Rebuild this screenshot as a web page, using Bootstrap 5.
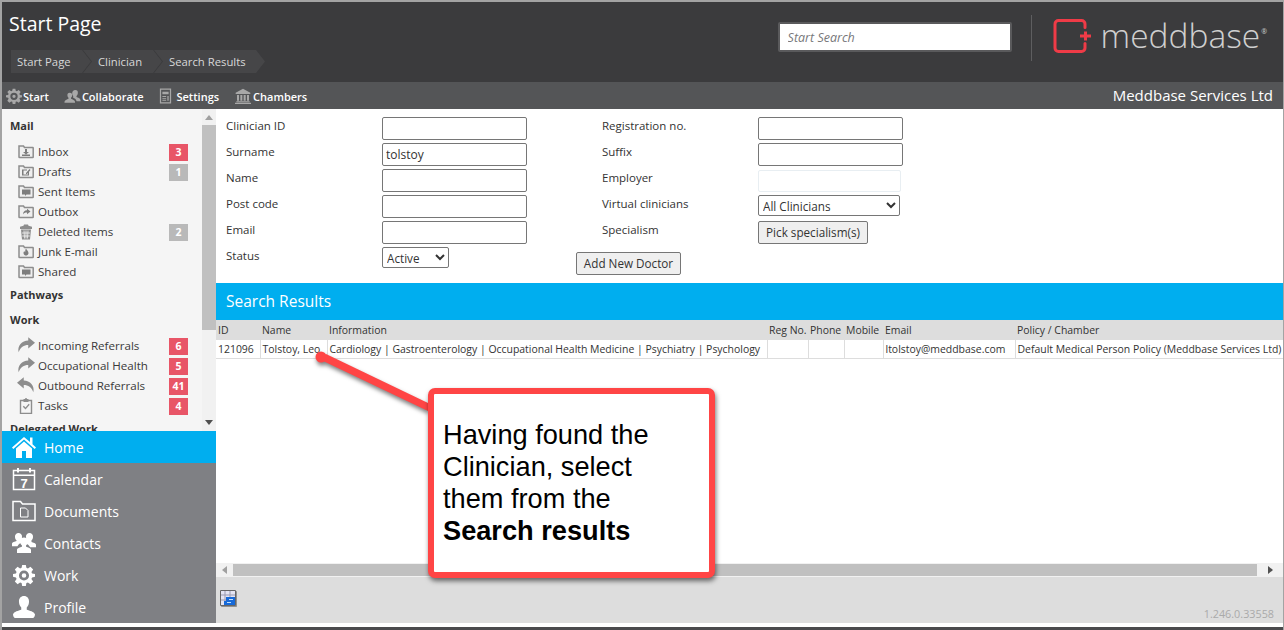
<!DOCTYPE html>
<html lang="en">
<head>
<meta charset="utf-8">
<title>Start Page</title>
<link rel="stylesheet" href="https://cdn.jsdelivr.net/npm/bootstrap@5.3.0/dist/css/bootstrap.min.css">
<style>
html,body{height:630px;overflow:hidden}
body{font-family:"Open Sans","Noto Sans",sans-serif;font-size:11.5px;color:#333;background:#fff}
.shell{position:relative;width:1284px;height:630px;background:#fff;border-top:2px solid #a3a3a3;border-left:2px solid #a3a3a3;border-right:1px solid #a3a3a3;overflow:hidden}
.head-top{height:80px;background:#3b3b3d;color:#fff}
.page-title{font-size:19.5px;line-height:26px;padding:9px 0 0 7px;margin:0;font-weight:400}
.crumbs{margin:13px 0 0 9px;height:23px}
.crumb{height:23px;line-height:23px;background:#464648;color:#d8d8d8;font-size:11.3px;clip-path:polygon(0 0,calc(100% - 9px) 0,100% 50%,calc(100% - 9px) 100%,0 100%,9px 50%);margin-right:-8px}
.crumb1{width:80px;padding-left:6px;clip-path:polygon(0 0,calc(100% - 9px) 0,100% 50%,calc(100% - 9px) 100%,0 100%)}
.crumb2{width:79px;padding-left:15px}
.crumb3{width:111px;padding-left:15px}
.search-box{width:234px;height:30px;margin:20px 19px 0 0;border:2px solid #5a5a5c;background:#fff;color:#77777a;font-style:italic;font-size:12.5px;padding:0 8px;border-radius:2px}
.search-box::placeholder{color:#77777a;opacity:1}
.logo-rule{width:1px;height:46px;background:#5e5e60;margin:13px 21px 0 0}
.logo-wrap{margin:9px 16px 0 0}
.logo-text{font-size:33.5px;font-weight:300;color:#cfcfcf;line-height:48px;margin-left:10px}
.logo-reg{font-size:7px;color:#cfcfcf;margin:16px 0 0 1px;line-height:10px}
.tool-bar{height:27px;background:#545557;color:#fff;padding:3px 0 0 4px}
.tool-item{font-weight:600;font-size:11px;margin-right:15px;color:#fff}
.tool-item svg{margin-right:1px;margin-top:-3px;color:#a8a8a8}
.tool-item:nth-child(3){margin-right:16px}
.tool-item:nth-child(3) svg{margin-right:3px}
.tool-item:nth-child(4) svg{margin-right:2px}
.org-name{font-size:15px;font-weight:500;margin:-3px 10px 0 auto}
.body-row{height:514px}
.side-col{width:214px;flex:none}
.side-top{height:322px;background:#f5f5f5}
.side-list{width:200px;height:322px;overflow:hidden;padding-top:7px}
.side-head{font-weight:700;font-size:11px;color:#333;padding-left:8px;line-height:20px}
.side-gap1{margin-top:3px}
.side-gap2{margin-top:5px}
.side-gap3{margin-top:3px}
.side-item{height:20px;padding-left:16px;font-size:11.6px;color:#3a3a3a}
.side-item svg{width:16px;height:16px;margin-right:4px;flex:none}
.side-item svg.wide-icon{width:18px;height:18px;margin:-3px 3px 0 -1px}
.side-mt{height:6px}
.count{width:19px;height:17px;line-height:17px;text-align:center;font-size:10.5px;font-weight:700;color:#fff;margin-left:auto;margin-right:14px}
.count-red{background:#e85567}
.count-grey{background:#b9b9b9}
.v-track{width:14px;background:#f1f1f1}
.v-thumb{height:205px;background:#c0c0c0}
.arrow-box{height:16px;color:#888}
.arrow-tall{height:100px;align-items:flex-end;padding-bottom:5px}
.main-nav{height:192px;background:#7f8084}
.main-link{height:32px;color:#fff;font-size:14px;padding-left:10px;text-decoration:none}
.main-link svg{width:24px;height:24px;margin-right:8px;flex:none}
.main-link svg.small-icon{width:22px;height:22px;margin:0 9px 0 1px}
.main-active{background:#00aeef}
.side-white{height:4px;background:#fff}
.content{width:1067px;flex:none;background:#fff}
.form-zone{height:174px;padding-top:8px}
.form-left{width:360px;padding-left:10px}
.form-line{height:26px}
.form-line label{width:156px;flex:none;font-size:11.5px;color:#333;padding-bottom:9px}
.form-right label{margin-left:26px}
.fld{width:145px;height:23px;border:1px solid #767676;border-radius:2px;padding:0 3px;font-size:12px;color:#333;background:#fff;font-family:inherit;margin-bottom:3px}
.fld-off{border-color:#e8eef2;width:143px;height:22px}
.pick{height:23px;border:1px solid #767676;border-radius:2px;background:#efefef;font-size:11.7px;color:#333;font-family:inherit;margin-bottom:3px;padding:0}
.pick-add{width:105px;margin-top:5px}
.pick-spec{width:110px}
.sel{height:21px;border:1px solid #767676;border-radius:2px;background:#fff;font-size:11.7px;color:#333;font-family:inherit;margin-bottom:5px}
.sel-status{width:67px}
.sel-virtual{width:142px}
.band{height:37px;line-height:37px;background:#00aeef;color:#fff;font-size:15.5px;padding-left:10px}
.res-table{table-layout:fixed;width:1067px;margin:0;border-collapse:collapse;font-size:10.45px;color:#333}
.res-table th{background:#ddd;font-weight:400;height:20px;padding:1px 2px 0;border:0;white-space:nowrap;overflow:hidden}
.res-table td{height:18px;padding:2px 2px 0;border-bottom:1px solid #ddd;border-right:1px solid #ddd;white-space:nowrap;overflow:hidden}
.res-table td:last-child{border-right:0}
.c-id{width:44px}.c-name{width:67px}.c-info{width:440px}.c-reg{width:41px}.c-ph{width:36px}.c-mob{width:39px}.c-mail{width:132px}.c-pol{width:268px}
.blank{height:204px}
.h-track{height:14px;background:#f1f1f1;padding:1px 0}
.h-btn{width:17px;color:#666;font-size:8px;text-align:center}
.h-btn-end{width:26px}
.h-thumb{background:#c0c0c0}
.foot-bar{height:46px;background:#ddd;padding:13px 0 0 4px}
.grid-icon{filter:drop-shadow(1px 1px 0 rgba(0,0,0,.35))}
.ver{font-size:10.8px;color:#aaa;margin:16px 9px 0 auto}
.bottom-strip{height:3px;background:#4a4a4c;position:absolute;left:0;right:0;bottom:0}
.pointer{position:absolute;left:300px;top:335px;filter:drop-shadow(1px 3px 2px rgba(0,0,0,.5))}
.callout{position:absolute;left:426px;top:386px;width:287px;height:190px;border:6px solid #ff4545;border-radius:7px;background:#fff;box-shadow:1px 3px 5px rgba(0,0,0,.55);font-family:"Liberation Sans",Arial,sans-serif;font-size:27.2px;line-height:32px;color:#000;padding:25px 9px 0 9px}
.callout b{font-weight:700}
</style>
</head>
<body>
<svg width="0" height="0" class="position-absolute">
<defs>
<symbol id="i-gear" viewBox="0 0 24 24"><path fill="currentColor" fill-rule="evenodd" d="M10 1h4l.6 3.200 1.700.7L19 3l3 3-1.900 2.700.7 1.700L24 11v3l-3.200.6-.7 1.700L22 19l-3 3-2.700-1.900-1.700.7L14 24h-4l-.6-3.200-1.700-.7L5 22l-3-3 1.900-2.700-.7-1.700L0 14v-3l3.200-.6.7-1.700L2 6l3-3 2.700 1.900 1.700-.7zM12 7a5.500 5.500 0 1 0 0 11 5.500 5.500 0 0 0 0-11zm0 3a2.500 2.500 0 1 1 0 5 2.500 2.500 0 0 1 0-5z"/></symbol>
<symbol id="i-people" viewBox="0 0 24 24"><path fill="currentColor" d="M16 3a4 4 0 0 1 4 4.500c0 2-1 3.500-2 4.500v1.500c2 .8 6 2 6 4.500v2h-6c0-3-3-4.500-5-5.500v-2.500c-1-1-1.500-2.500-1.500-4C11.500 5 13.500 3 16 3zM8 7a3.500 3.500 0 0 1 3.500 3.800c0 1.700-.8 3-1.700 3.900v1.300c2 .9 6 2.300 6 4.500V22H0v-1.500c0-2.200 4-3.600 6-4.500v-1.300c-.9-.9-1.600-2.200-1.600-3.900A3.500 3.500 0 0 1 8 7z"/></symbol>
<symbol id="i-doc" viewBox="0 0 24 24"><path fill="none" stroke="currentColor" stroke-width="2" d="M4 1h16v22H4z"/><path fill="currentColor" d="M7 5h10v4H7zM7 12h6v1.500H7zM7 15h6v1.500H7zM7 18h6v1.500H7zM15 12h2v7.500h-2z"/></symbol>
<symbol id="i-bank" viewBox="0 0 24 24"><path fill="currentColor" d="M12 1l11 6v2H1V7zM3 10.500h3V19H3zM8 10.500h3V19H8zM13 10.500h3V19h-3zM18 10.500h3V19h-3zM2 20h20v1.500H2zM0 22h24v2H0z"/></symbol>
<symbol id="f-base" viewBox="0 0 16 16"><path fill="#efefef" stroke="#8d8d8d" stroke-width="1.500" d="M1 13V2h4.500l1 1.500h8.300c.2 0 .4.200.4.400V13c0 .3-.2.500-.5.500H1.500c-.3 0-.5-.2-.5-.5z"/></symbol>
<symbol id="i-inbox" viewBox="0 0 16 16"><use href="#f-base"/><path fill="#7d7d7d" d="M7 5h2v3h2l-3 2.500L5 8h2zM4 10.500h8V12H4z"/></symbol>
<symbol id="i-drafts" viewBox="0 0 16 16"><use href="#f-base"/><path fill="#7d7d7d" d="M4 5.500h5v1H5.500v4h4.500v-2l1-1v4H4zM8 9l3.500-4 1 1L9 10H8z"/></symbol>
<symbol id="i-sent" viewBox="0 0 16 16"><use href="#f-base"/><path fill="#7d7d7d" d="M4 5.500h8.500v5H8.500L7 12v-1.500H4z"/></symbol>
<symbol id="i-out" viewBox="0 0 16 16"><use href="#f-base"/><path fill="#7d7d7d" d="M9 4.800l3.500 2.700L9 10.200V8.500c-2 0-3.200.6-4 2 0-2.700 1.500-4 4-4.200z"/></symbol>
<symbol id="i-trash" viewBox="0 0 16 16"><path fill="#8d8d8d" d="M6 .5h4l.5 1.200 3.500 1V5H2V2.700l3.500-1zM3 5.500h10l-1 10H4z"/><path stroke="#f5f5f5" stroke-width=".8" d="M6 6.500l.5 8M8 6.500v8M10 6.500l-.5 8M4 9h8M4.200 12h7.600"/></symbol>
<symbol id="i-junk" viewBox="0 0 16 16"><use href="#f-base"/><path fill="#7d7d7d" d="M8 4.500c.5 1.500 2.500 2.500 2.500 4.500 0 1.500-1 2.500-2.500 2.500S5.500 10.500 5.500 9c0-1 .5-1.500 1-2 0 .7.300 1 .7 1.200C7.200 7 7.300 5.500 8 4.500z"/></symbol>
<symbol id="i-fwd" viewBox="0 0 16 16"><path fill="#8d8d8d" d="M10 1l6 5-6 5V8C6 8 3 10 1.500 14.500c-1.500-6 3-10.300 8.500-10.500z"/></symbol>
<symbol id="i-back" viewBox="0 0 16 16"><path fill="#8d8d8d" d="M6 1L0 6l6 5V8c4 0 7 2 8.500 6.500 1.500-6-3-10.300-8.500-10.500z"/></symbol>
<symbol id="i-task" viewBox="0 0 16 16"><path fill="none" stroke="#8d8d8d" stroke-width="1.400" d="M2.500 2.500h11v13h-11z"/><path fill="#8d8d8d" d="M5.500 1h1.500l.5-1h1l.5 1h1.500v3h-5zM4.800 8.800l1-1 1.700 1.700 3.200-3.700 1 .9-4.200 4.800z"/></symbol>
<symbol id="n-home" viewBox="0 0 24 24"><path fill="#fff" fill-rule="evenodd" d="M12 2l6 5V2.500h2.500v6.700L24 12.500 22.700 14 12 4.500 1.300 14 0 12.500zM4 13.500L12 6.500l8 7V23H4zM10 16v7h4v-7z"/></symbol>
<symbol id="n-cal" viewBox="0 0 24 24"><path fill="none" stroke="#fff" stroke-width="1.500" d="M1.500 3.500h21v19h-21z"/><path fill="#fff" d="M2 7.500h20V9H2zM5 1h2v4.500H5zM17 1h2v4.500h-2z"/><text x="12" y="20.500" text-anchor="middle" font-size="13" font-weight="700" fill="#fff" font-family="Liberation Sans,sans-serif">7</text></symbol>
<symbol id="n-docs" viewBox="0 0 24 24"><path fill="none" stroke="#fff" stroke-width="1.500" d="M1 21.500V2.500h7.500l2 2.500h12.500v16.500z"/><path fill="none" stroke="#fff" stroke-width="1" d="M8.500 9h5l2.500 2.500V18H8.500z"/></symbol>
<symbol id="n-con" viewBox="0 0 24 24"><path fill="#fff" d="M6.500 2a3.500 3.500 0 0 1 3.500 4c0 1.500-.7 2.500-1.500 3.300v1.200c.5.200 1 .5 1.500.7-1.500.8-4 2-4.500 4H0v-2.500c0-1.500 3-2.200 4.500-2.700V9.300C3.700 8.500 3 7.500 3 6a3.500 3.500 0 0 1 3.500-4zM17.500 2A3.500 3.500 0 0 1 21 6c0 1.500-.7 2.500-1.500 3.300V11c1.500.5 4.500 1.200 4.500 2.700v2.500h-6c-.5-2-3-3.200-4.500-4 .5-.2 1-.5 1.500-.7V9.300C14.700 8.500 14 7.500 14 6a3.500 3.500 0 0 1 3.500-4zM12 6.500a3.800 3.800 0 0 1 3.800 4.200c0 1.700-.8 2.800-1.700 3.600v1.500c1.700.6 4.900 1.500 4.900 3.200V22H5v-3c0-1.700 3.200-2.600 4.900-3.200v-1.500c-.9-.8-1.700-1.900-1.700-3.600A3.800 3.800 0 0 1 12 6.500z"/></symbol>
<symbol id="n-gear" viewBox="0 0 24 24"><use href="#i-gear" color="#fff"/></symbol>
<symbol id="n-user" viewBox="0 0 24 24"><path fill="#fff" d="M12 0c3.500 0 5.500 2.700 5.500 6 0 2.800-1 5-2.500 6.500V15c3 1 8 2 9 5 0 2-1 4-2 4H2c-1 0-2-2-2-4 1-3 6-4 9-5v-2.500C7.500 11 6.500 8.800 6.500 6 6.500 2.700 8.500 0 12 0z"/></symbol>
</defs>
</svg>
<div class="shell">
  <header class="head-top d-flex justify-content-between">
    <div>
      <h1 class="page-title">Start Page</h1>
      <nav class="crumbs d-flex">
        <div class="crumb crumb1">Start Page</div>
        <div class="crumb crumb2">Clinician</div>
        <div class="crumb crumb3">Search Results</div>
      </nav>
    </div>
    <div class="d-flex align-items-start">
      <input class="search-box" type="text" placeholder="Start Search">
      <div class="logo-rule"></div>
      <div class="logo-wrap d-flex">
        <svg width="38" height="52" viewBox="0 0 38 52"><path fill="none" stroke="#ef3b47" stroke-width="3" stroke-linecap="round" d="M32 16.500V13c0-2-1.500-3.500-3.500-3.500H5.500C3.500 9.500 2 11 2 13v24c0 2 1.500 3.500 3.500 3.500h23c2 0 3.500-1.500 3.500-3.500v-4.500"/><path fill="#ef3b47" d="M31 20.500h3v3H38v3h-4v3h-3v-3h-4v-3h4z"/></svg>
        <div class="logo-text">meddbase</div>
        <div class="logo-reg">®</div>
      </div>
    </div>
  </header>
  <div class="tool-bar d-flex align-items-center">
    <div class="tool-item d-flex align-items-center"><svg width="16" height="16"><use href="#i-gear"/></svg>Start</div>
    <div class="tool-item d-flex align-items-center"><svg width="17" height="16"><use href="#i-people"/></svg>Collaborate</div>
    <div class="tool-item d-flex align-items-center"><svg width="15" height="16"><use href="#i-doc"/></svg>Settings</div>
    <div class="tool-item d-flex align-items-center"><svg width="16" height="16"><use href="#i-bank"/></svg>Chambers</div>
    <div class="org-name">Meddbase Services Ltd</div>
  </div>
  <div class="body-row d-flex">
    <aside class="side-col">
      <div class="side-top d-flex">
        <div class="side-list flex-grow-1">
          <div class="side-head">Mail</div>
          <div class="side-mt"></div>
          <div class="side-item d-flex align-items-center"><svg><use href="#i-inbox"/></svg>Inbox<span class="count count-red">3</span></div>
          <div class="side-item d-flex align-items-center"><svg><use href="#i-drafts"/></svg>Drafts<span class="count count-grey">1</span></div>
          <div class="side-item d-flex align-items-center"><svg><use href="#i-sent"/></svg>Sent Items</div>
          <div class="side-item d-flex align-items-center"><svg><use href="#i-out"/></svg>Outbox</div>
          <div class="side-item d-flex align-items-center"><svg><use href="#i-trash"/></svg>Deleted Items<span class="count count-grey">2</span></div>
          <div class="side-item d-flex align-items-center"><svg><use href="#i-junk"/></svg>Junk E-mail</div>
          <div class="side-item d-flex align-items-center"><svg><use href="#i-sent"/></svg>Shared</div>
          <div class="side-head side-gap1">Pathways</div>
          <div class="side-head side-gap2">Work</div>
          <div class="side-mt"></div>
          <div class="side-item d-flex align-items-center"><svg class="wide-icon"><use href="#i-fwd"/></svg>Incoming Referrals<span class="count count-red">6</span></div>
          <div class="side-item d-flex align-items-center"><svg class="wide-icon"><use href="#i-fwd"/></svg>Occupational Health<span class="count count-red">5</span></div>
          <div class="side-item d-flex align-items-center"><svg class="wide-icon"><use href="#i-back"/></svg>Outbound Referrals<span class="count count-red">41</span></div>
          <div class="side-item d-flex align-items-center"><svg><use href="#i-task"/></svg>Tasks<span class="count count-red">4</span></div>
          <div class="side-head side-gap3">Delegated Work</div>
        </div>
        <div class="v-track">
          <div class="arrow-box d-flex justify-content-center align-items-center"><svg width="8" height="5"><path fill="#a0a0a0" d="M4 0l4 5H0z"/></svg></div>
          <div class="v-thumb"></div>
          <div class="arrow-box arrow-tall d-flex justify-content-center"><svg width="8" height="5"><path fill="#505050" d="M0 0h8L4 5z"/></svg></div>
        </div>
      </div>
      <nav class="main-nav">
        <a class="main-link main-active d-flex align-items-center" href="#"><svg><use href="#n-home"/></svg>Home</a>
        <a class="main-link d-flex align-items-center" href="#"><svg><use href="#n-cal"/></svg>Calendar</a>
        <a class="main-link d-flex align-items-center" href="#"><svg><use href="#n-docs"/></svg>Documents</a>
        <a class="main-link d-flex align-items-center" href="#"><svg><use href="#n-con"/></svg>Contacts</a>
        <a class="main-link d-flex align-items-center" href="#"><svg class="small-icon"><use href="#n-gear"/></svg>Work</a>
        <a class="main-link d-flex align-items-center" href="#"><svg class="small-icon"><use href="#n-user"/></svg>Profile</a>
      </nav>
    </aside>
    <main class="content">
      <form class="form-zone d-flex">
        <div class="form-left">
          <div class="form-line d-flex align-items-center"><label>Clinician ID</label><input class="fld" type="text"></div>
          <div class="form-line d-flex align-items-center"><label>Surname</label><input class="fld" type="text" value="tolstoy"></div>
          <div class="form-line d-flex align-items-center"><label>Name</label><input class="fld" type="text"></div>
          <div class="form-line d-flex align-items-center"><label>Post code</label><input class="fld" type="text"></div>
          <div class="form-line d-flex align-items-center"><label>Email</label><input class="fld" type="text"></div>
          <div class="form-line d-flex align-items-center"><label>Status</label><select class="sel sel-status"><option>Active</option></select></div>
        </div>
        <div class="form-right">
          <div class="form-line d-flex align-items-center"><label>Registration no.</label><input class="fld" type="text"></div>
          <div class="form-line d-flex align-items-center"><label>Suffix</label><input class="fld" type="text"></div>
          <div class="form-line d-flex align-items-center"><label>Employer</label><input class="fld fld-off" type="text"></div>
          <div class="form-line d-flex align-items-center"><label>Virtual clinicians</label><select class="sel sel-virtual"><option>All Clinicians</option></select></div>
          <div class="form-line d-flex align-items-center"><label>Specialism</label><button type="button" class="pick pick-spec">Pick specialism(s)</button></div>
          <button type="button" class="pick pick-add">Add New Doctor</button>
        </div>
      </form>
      <div class="band">Search Results</div>
      <table class="res-table">
        <thead><tr><th class="c-id">ID</th><th class="c-name">Name</th><th class="c-info">Information</th><th class="c-reg">Reg No.</th><th class="c-ph">Phone</th><th class="c-mob">Mobile</th><th class="c-mail">Email</th><th class="c-pol">Policy / Chamber</th></tr></thead>
        <tbody><tr><td>121096</td><td>Tolstoy, Leo</td><td>Cardiology | Gastroenterology | Occupational Health Medicine | Psychiatry | Psychology</td><td></td><td></td><td></td><td>ltolstoy@meddbase.com</td><td>Default Medical Person Policy (Meddbase Services Ltd)</td></tr></tbody>
      </table>
      <div class="blank"></div>
      <div class="h-track d-flex">
        <div class="h-btn d-flex align-items-center justify-content-center"><svg width="5" height="8"><path fill="#a0a0a0" d="M5 0v8L0 4z"/></svg></div>
        <div class="h-thumb flex-grow-1"></div>
        <div class="h-btn h-btn-end d-flex align-items-center justify-content-center"><svg width="5" height="8"><path fill="#505050" d="M0 0v8l5-4z"/></svg></div>
      </div>
      <div class="foot-bar d-flex align-items-start">
        <svg class="grid-icon" width="16" height="16" viewBox="0 0 16 16"><path fill="#e4e4f2" stroke="#666" d="M.5.500h15v15H.5z"/><path stroke="#9a9ab0" d="M5 1v14M10 1v14M1 5h14M1 10h14"/><path fill="#1669d8" d="M6 7h9v8H4v-4h2z"/><path fill="#bfe0ff" d="M9 9h4v1H9zM7 12h4v1H7z"/></svg>
        <div class="ver">1.246.0.33558</div>
      </div>
    </main>
  </div>
  <div class="side-white"></div>
  <div class="bottom-strip"></div>
  <svg class="pointer" width="140" height="90" viewBox="0 0 140 90"><circle cx="19" cy="20" r="5.500" fill="#ff4545"/><path fill="#ff4545" d="M24 17l102 49v8L19 23z"/></svg>
  <div class="callout">Having found the<br>Clinician, select<br>them from the<br><b>Search results</b></div>
</div>
<script src="https://cdn.jsdelivr.net/npm/bootstrap@5.3.0/dist/js/bootstrap.bundle.min.js"></script>
</body>
</html>
